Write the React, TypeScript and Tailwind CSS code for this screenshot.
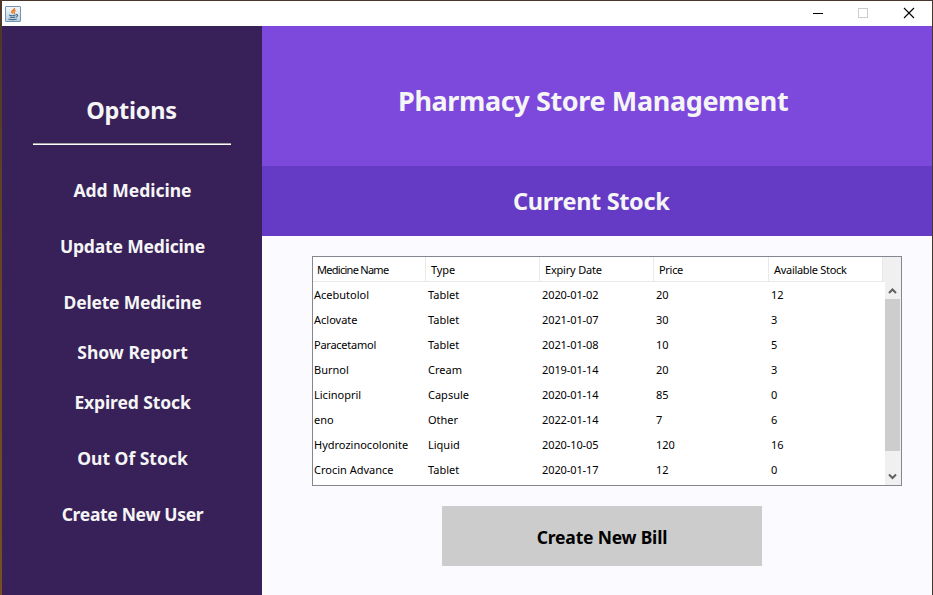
import clsx from "clsx";

const options = [
  { label: "Add Medicine", box: "h-14" },
  { label: "Update Medicine", box: "h-14 tracking-[-0.17px]" },
  { label: "Delete Medicine", box: "h-14 tracking-[-0.2px]" },
  { label: "Show Report", box: "h-11" },
  { label: "Expired Stock", box: "h-14 tracking-[-0.12px]" },
  { label: "Out Of Stock", box: "h-14" },
  { label: "Create New User", box: "h-14 tracking-[-0.32px]" },
];

const headers = [
  { label: "Medicine Name", track: "pl-1 tracking-[-0.72px]" },
  { label: "Type", track: "pl-[5px] tracking-[-0.1px]" },
  { label: "Expiry Date", track: "pl-[5px] tracking-[-0.2px]" },
  { label: "Price", track: "pl-[5px] tracking-[-0.3px]" },
  { label: "Available Stock", track: "pl-[5px] tracking-[-0.3px]" },
];

const rows = [
  ["Acebutolol", "Tablet", "2020-01-02", "20", "12"],
  ["Aclovate", "Tablet", "2021-01-07", "30", "3"],
  ["Paracetamol", "Tablet", "2021-01-08", "10", "5"],
  ["Burnol", "Cream", "2019-01-14", "20", "3"],
  ["Licinopril", "Capsule", "2020-01-14", "85", "0"],
  ["eno", "Other", "2022-01-14", "7", "6"],
  ["Hydrozinocolonite", "Liquid", "2020-10-05", "120", "16"],
  ["Crocin Advance", "Tablet", "2020-01-17", "12", "0"],
];

const columns = "grid grid-cols-[113px_114px_114px_115px_114px]";

function JavaIcon() {
  return (
    <svg width="16" height="16" viewBox="0 0 16 16">
      <defs>
        <linearGradient id="tile" x1="0" y1="0" x2="0" y2="1">
          <stop offset="0" stopColor="#f6f9fb" />
          <stop offset="1" stopColor="#b9cddd" />
        </linearGradient>
      </defs>
      <rect x="0.5" y="0.5" width="15" height="15" rx="0.5" fill="url(#tile)" stroke="#7295b3" />
      <path d="M9.500 2c.6 1.700-3.200 2.300-2.700 4 .2.700.8 1 .9 1.700M10.500 4.300c-1.500.7-1.900 1.400-1.300 2.200.4.500.2.900-.2 1.300" fill="none" stroke="#ea7c22" strokeWidth="1.500" />
      <path d="M4 9c1.500.7 4.800.7 6.500 0M4.800 11c1.500.6 3.800.6 5.400 0M3.400 13c2.300.7 6.300.7 8.300 0M10.700 8.700c2.600-.5 2.200 1.900.1 2.500" fill="none" stroke="#3f6b8d" strokeWidth="1.100" />
    </svg>
  );
}

function TitleBar() {
  return (
    <div className="flex h-[25px] items-center bg-white pl-[3px]">
      <JavaIcon />
      <svg className="ml-auto" width="120" height="25" viewBox="0 0 120 25" shapeRendering="crispEdges">
        <path d="M1 12.500h10" stroke="#000" />
        <rect x="46.500" y="7.500" width="9" height="9" fill="none" stroke="#ccc" />
        <path d="M92 7l10 10M102 7l-10 10" stroke="#000" strokeWidth="1.100" shapeRendering="auto" />
      </svg>
    </div>
  );
}

function Sidebar() {
  return (
    <nav className="flex w-[260px] flex-col items-center bg-[#382159] text-[17.5px] font-bold text-[#f5f5f5]">
      <h2 className="mt-[60px] h-12 pr-px text-[23.5px] leading-[49px] tracking-[-0.25px]">Options</h2>
      <div className="mt-[9px] h-0.5 w-[198px] border-t border-[#a0a0a0] bg-white" />
      <div className="mt-[17px] flex flex-col items-center pl-px">
        {options.map((o) => (
          <div key={o.label} className={clsx("flex items-center whitespace-nowrap", o.box)}>
            {o.label}
          </div>
        ))}
      </div>
    </nav>
  );
}

function ScrollBar() {
  return (
    <div className="flex w-4 flex-col bg-[#f0f0f0]">
      <svg width="16" height="17" viewBox="0 0 16 17">
        <path d="M4 11L7.500 7.500L11 11" fill="none" stroke="#606060" strokeWidth="2" />
      </svg>
      <div className="h-[152px] w-[15px] bg-[#cdcdcd]" />
      <svg className="mt-auto" width="16" height="17" viewBox="0 0 16 17">
        <path d="M4 6.500L7.500 10L11 6.500" fill="none" stroke="#606060" strokeWidth="2" />
      </svg>
    </div>
  );
}

function StockTable() {
  return (
    <div className="ml-[50px] mt-5 flex h-[230px] w-[590px] flex-col border border-[#828790] bg-white text-[11px] text-black">
      <div className="flex h-[25px] bg-[#f0f0f0]">
        <div className={columns}>
          {headers.map((h) => (
            <div key={h.label} className={clsx("flex items-center whitespace-nowrap border-b border-r border-[#e9e9e9] bg-white pt-[3px]", h.track)}>
              {h.label}
            </div>
          ))}
        </div>
      </div>
      <div className="flex grow">
        <div className="w-[572px]">
          {rows.map((r) => (
            <div key={r[0]} className={clsx("h-[25px]", columns)}>
              {r.map((c, i) => (
                <div
                  key={i}
                  className={clsx(
                    "flex items-center whitespace-nowrap pt-0.5",
                    i === 0 ? "pl-px" : "pl-0.5",
                    c === "Paracetamol" && "tracking-[-0.25px]",
                    i === 2 && "tracking-[-0.1px]",
                  )}
                >
                  {c}
                </div>
              ))}
            </div>
          ))}
        </div>
        <ScrollBar />
      </div>
    </div>
  );
}

export default function App() {
  return (
    <div className="flex h-[595px] w-[933px] overflow-hidden bg-[#46362b] font-['Noto_Sans','Open_Sans',sans-serif]">
      <div className="w-0.5 bg-linear-to-b from-[#4b372b] via-[#694623] to-[#794f20]" />
      <div className="mr-px mt-px flex grow flex-col">
        <TitleBar />
        <div className="flex grow">
          <Sidebar />
          <main className="flex w-[670px] flex-col bg-[#fbfaff] font-bold text-[#f5f5f5]">
            <h1 className="h-[140px] bg-[#7d48dc] pl-[136px] text-[27px] leading-[149px] tracking-[-0.38px] whitespace-nowrap">Pharmacy Store Management</h1>
            <h2 className="h-[70px] bg-[#653bc6] pl-[251px] text-[23.5px] leading-[71px] tracking-[-0.36px] whitespace-nowrap">Current Stock</h2>
            <div className="font-normal">
              <StockTable />
            </div>
            <button className="ml-[180px] mt-5 h-[60px] w-80 bg-[#cccccc] pt-0.5 text-[17.5px] font-bold tracking-[-0.2px] text-black">Create New Bill</button>
          </main>
        </div>
      </div>
    </div>
  );
}
